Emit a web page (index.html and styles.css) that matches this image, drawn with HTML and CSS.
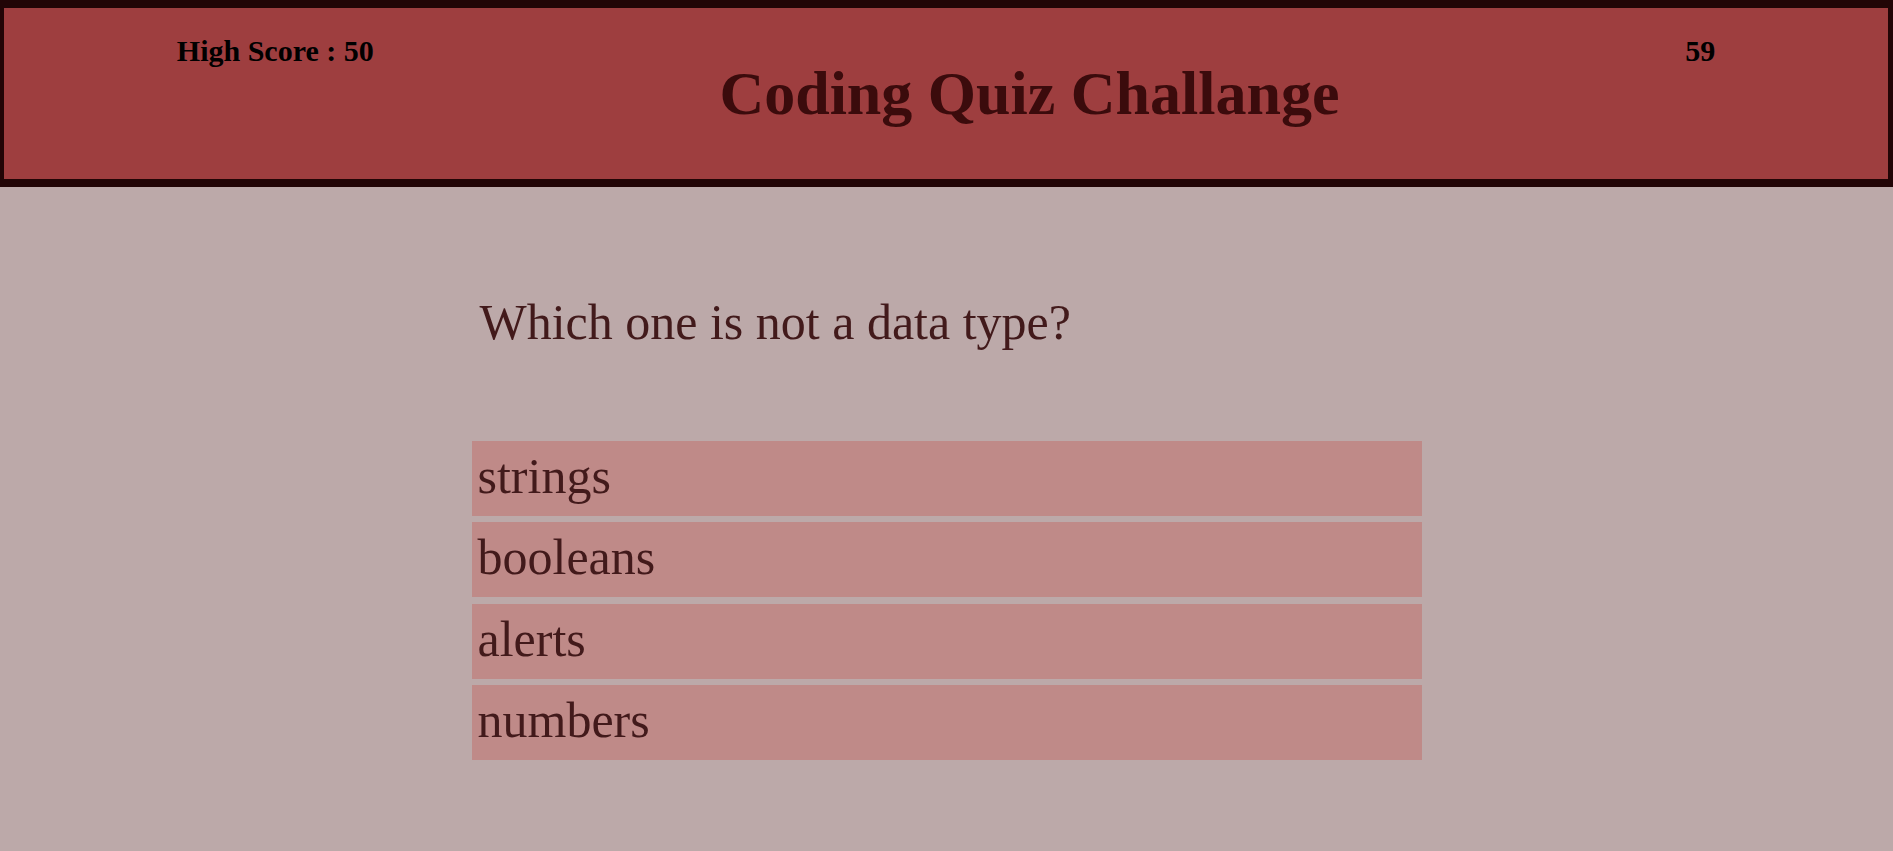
FILE: index.html
```html
<!DOCTYPE html>
<html lang="en">
<head>
<meta charset="utf-8">
<title>Coding Quiz Challange</title>
<link rel="stylesheet" href="styles.css">
</head>
<body>
<header class="top">
  <div class="score">High Score : 50</div>
  <h1 class="title">Coding Quiz Challange</h1>
  <div class="timer">59</div>
</header>
<main class="quiz">
  <p class="question">Which one is not a data type?</p>
  <ul class="options">
    <li class="option">strings</li>
    <li class="option">booleans</li>
    <li class="option">alerts</li>
    <li class="option">numbers</li>
  </ul>
</main>
</body>
</html>
```
FILE: styles.css
```css
html, body {
  margin: 0;
  padding: 0;
}
body {
  background: #bca9a9;
  font-family: "Liberation Serif", "Times New Roman", serif;
  min-height: 851px;
}
.top {
  display: flex;
  justify-content: space-around;
  align-items: flex-start;
  background: #9e3e3f;
  border-style: solid;
  border-color: #220506;
  border-width: 8px 5px 8px 4px;
  height: 171px;
  box-sizing: content-box;
}
.score, .timer {
  margin-top: 26px;
  font-size: 30px;
  line-height: 34px;
  font-weight: bold;
  color: #000;
}
.title {
  margin: 50px 0 0;
  font-size: 62px;
  line-height: 70px;
  font-weight: bold;
  color: #3b0b0c;
}
.quiz {
  width: 950px;
  margin: 0 auto;
  padding-top: 107px;
}
.question {
  margin: 0 0 90px;
  padding-left: 8px;
  font-size: 50px;
  line-height: 57px;
  color: #421a1b;
}
.options {
  list-style: none;
  margin: 0;
  padding: 0;
  display: flex;
  flex-direction: column;
  gap: 6.3px;
}
.option {
  background: #bf8a88;
  color: #421a1b;
  font-size: 50px;
  line-height: 58px;
  padding: 6px 6px 11px;
}
```
